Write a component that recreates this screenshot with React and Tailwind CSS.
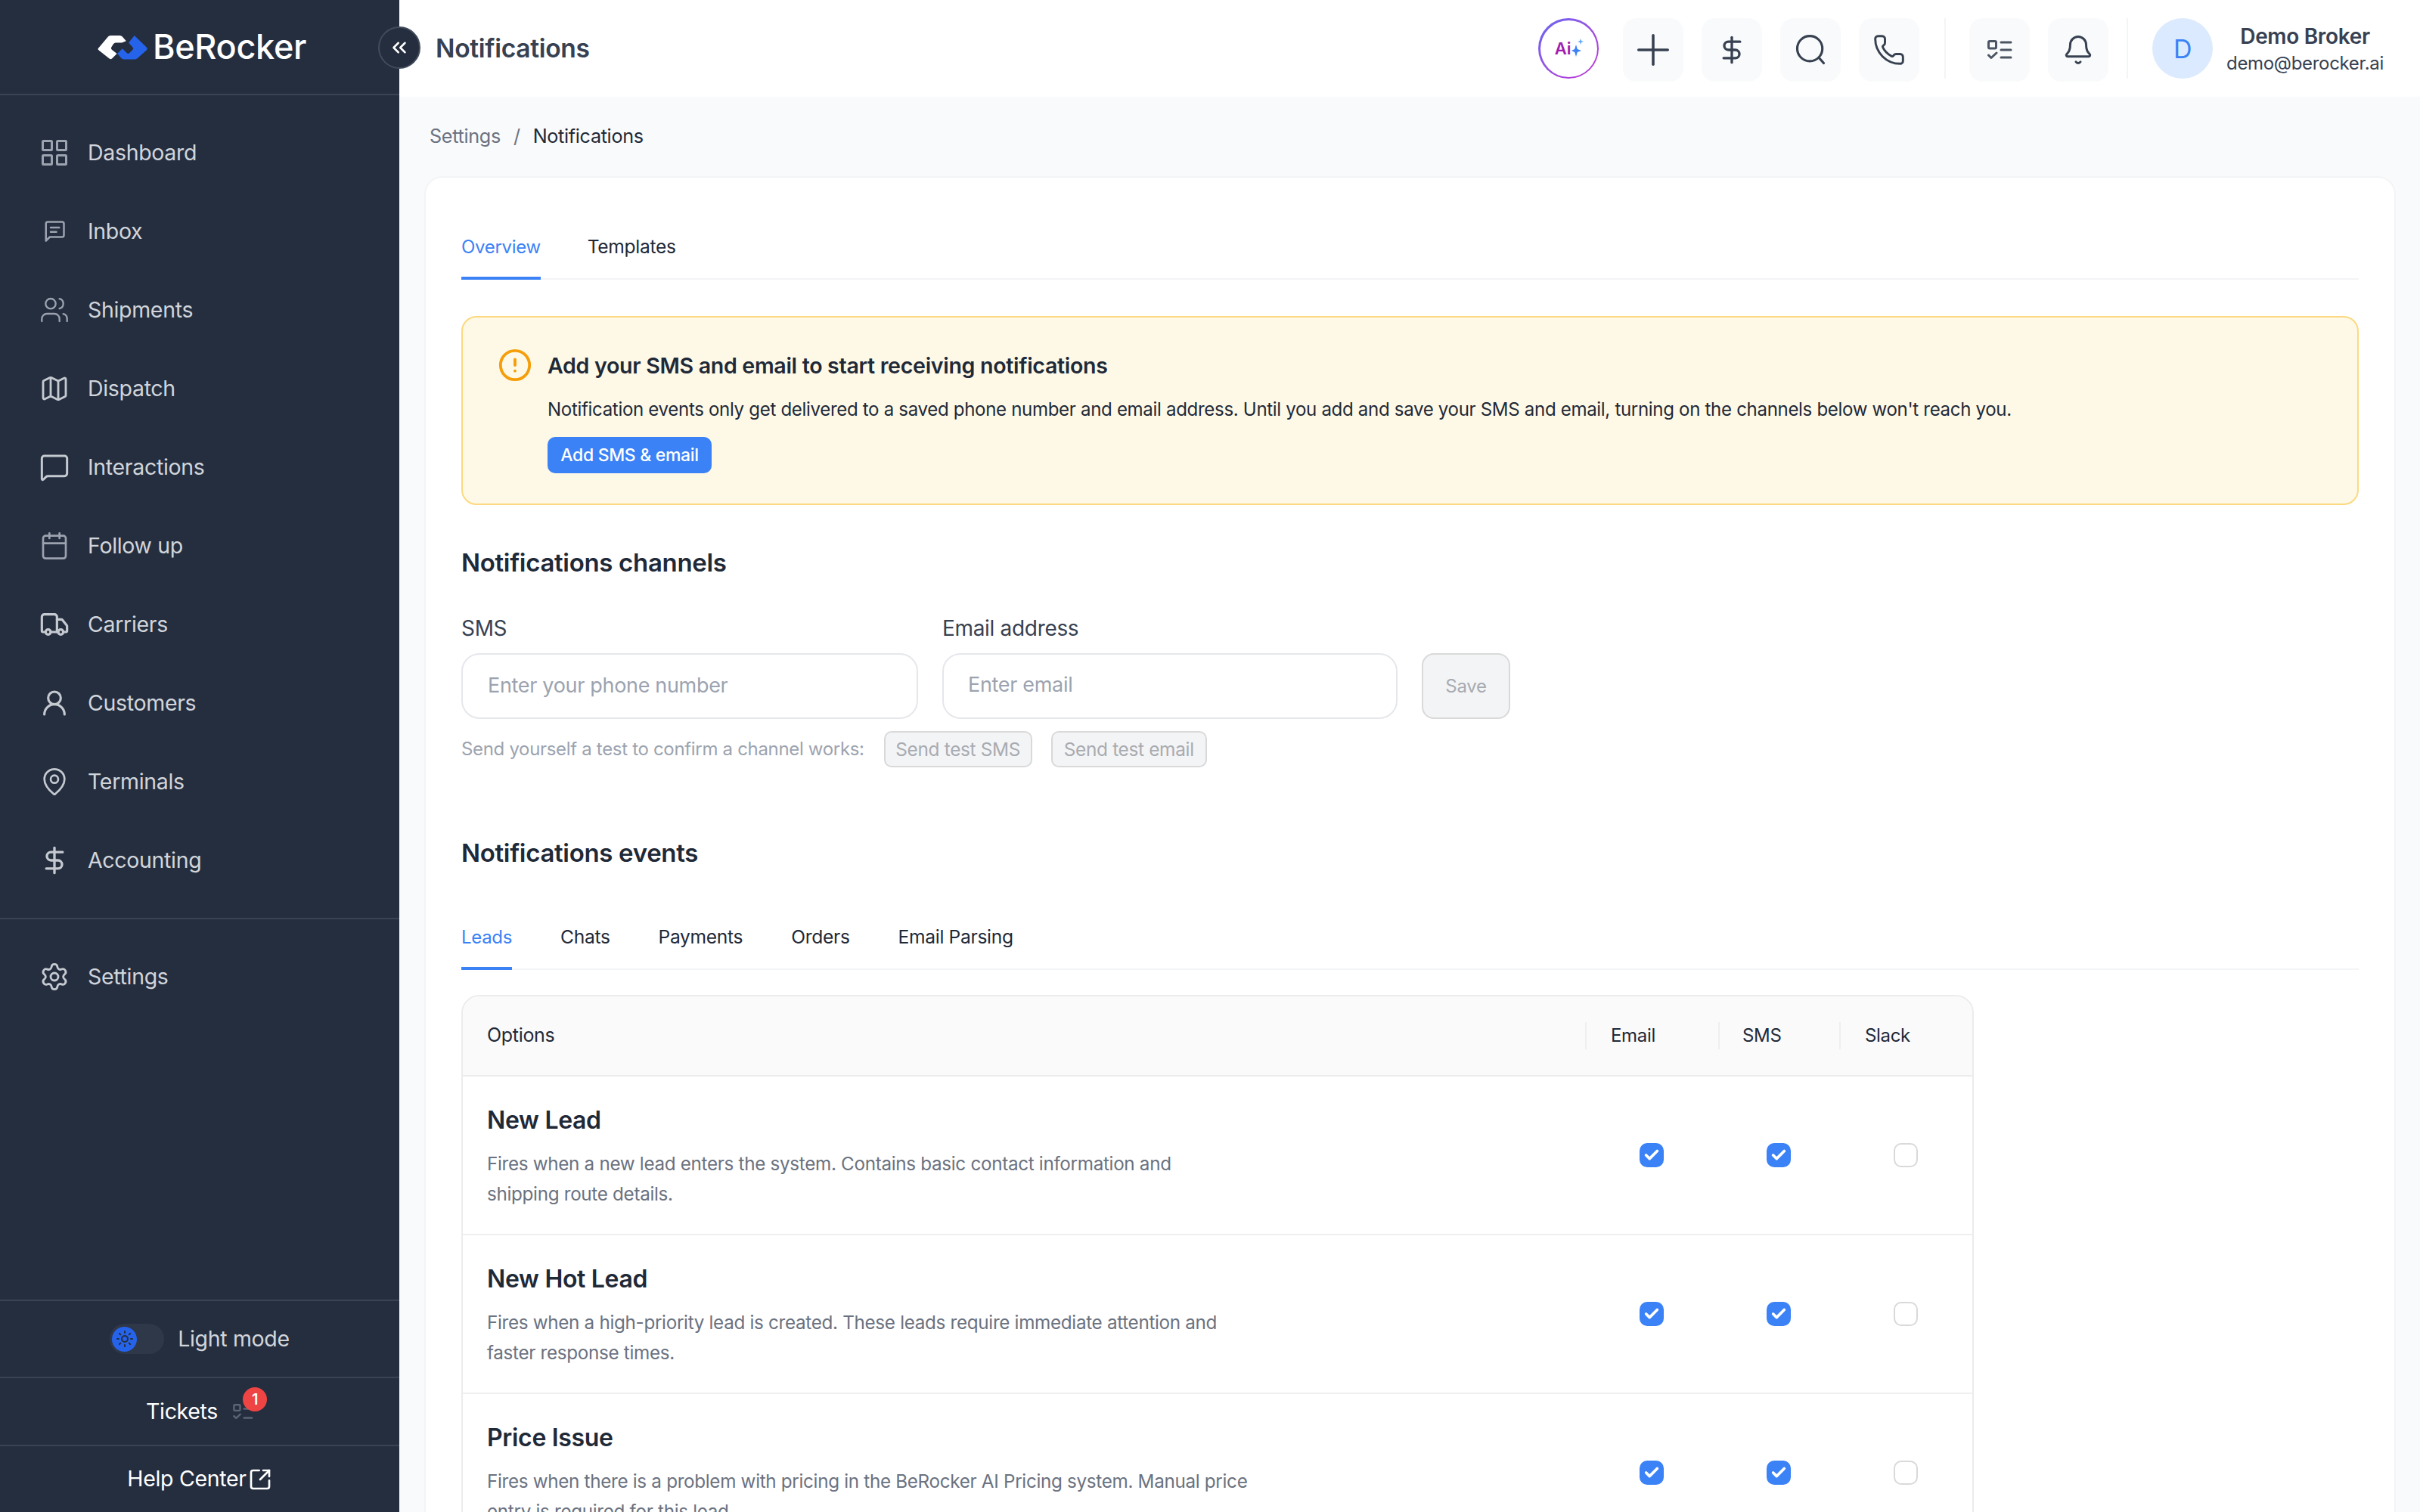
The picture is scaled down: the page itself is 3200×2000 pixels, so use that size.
import React from 'react';
import {
  Users, Map, MessageSquare, Calendar, Truck, UserRound, MapPin,
  Settings, ChevronsLeft, Plus, Phone, Bell, SquareArrowOutUpRight, CircleAlert, Check, Sun,
} from 'lucide-react';

const font = { fontFamily: 'Inter, sans-serif' };

function DashIcon() {
  return (
    <svg width="34" height="34" viewBox="0 0 34 34" fill="none" stroke="currentColor" strokeWidth="3">
      <rect x="1.5" y="1.5" width="12" height="12" rx="1" />
      <rect x="20.5" y="1.5" width="12" height="12" rx="1" />
      <rect x="1.5" y="20.5" width="12" height="12" rx="1" />
      <rect x="20.5" y="20.5" width="12" height="12" rx="1" />
    </svg>
  );
}

function InboxIcon() {
  return (
    <svg width="30" height="30" viewBox="0 0 24 24" fill="none" stroke="currentColor" strokeWidth="2" strokeLinecap="round" strokeLinejoin="round">
      <path d="M5 2h15a2 2 0 0 1 2 2v12a2 2 0 0 1-2 2H7l-4 4V4a2 2 0 0 1 2-2z" />
      <path d="M8 8h9M8 12.5h6" />
    </svg>
  );
}

function DollarIcon({ size = 40, strokeWidth = 2 }) {
  return (
    <svg width={size} height={size} viewBox="0 0 24 24" fill="none" stroke="currentColor" strokeWidth={strokeWidth} strokeLinecap="round" strokeLinejoin="round">
      <path d="M12 2v20" />
      <path d="M18.5 5.5H9.25a3.25 3.25 0 0 0 0 6.5h5.5a3.25 3.25 0 0 1 0 6.5H5.5" />
    </svg>
  );
}

function SearchIcon() {
  return (
    <svg width="42" height="42" viewBox="0 0 24 24" fill="none" stroke="currentColor" strokeWidth="1.8" strokeLinecap="round">
      <circle cx="11.5" cy="11" r="9.5" />
      <path d="M18.5 18l3.5 4" />
    </svg>
  );
}

function TasksIcon({ lines = 3, width = 33, height = 26 }) {
  return (
    <svg width={width} height={height} viewBox="0 0 33 26" fill="none" stroke="currentColor" strokeWidth="3" strokeLinecap="round" strokeLinejoin="round">
      <rect x="1.5" y="1.5" width="10" height="9.5" rx="1.5" />
      <path d="M1.5 20l3.5 3.5 7-6.5" />
      {lines === 3 ? <path d="M18 3h13M18 13h13M18 23h13" /> : <path d="M18 8h13M18 23h13" />}
    </svg>
  );
}

const navItems = [
  { label: 'Dashboard', icon: <DashIcon />, tone: 'text-[#9ca3af]' },
  { label: 'Inbox', icon: <InboxIcon />, tone: 'text-[#9ca3af]' },
  { label: 'Shipments', icon: <Users size={46} strokeWidth={1.4} />, tone: 'text-[#9ca3af]' },
  { label: 'Dispatch', icon: <Map size={54} strokeWidth={1.7} />, tone: 'text-[#c5c9d0]' },
  { label: 'Interactions', icon: <MessageSquare size={50} strokeWidth={1.8} />, tone: 'text-[#c5c9d0]' },
  { label: 'Follow up', icon: <Calendar size={42} strokeWidth={1.6} />, tone: 'text-[#9ca3af]' },
  { label: 'Carriers', icon: <Truck size={42} strokeWidth={1.9} />, tone: 'text-[#c5c9d0]' },
  { label: 'Customers', icon: <UserRound size={42} strokeWidth={1.9} />, tone: 'text-[#c5c9d0]' },
  { label: 'Terminals', icon: <MapPin size={46} strokeWidth={1.6} />, tone: 'text-[#c5c9d0]' },
  { label: 'Accounting', icon: <DollarIcon size={40} />, tone: 'text-[#c5c9d0]' },
];

const events = [
  { title: 'New Lead', width: 'w-[1000px]', desc: 'Fires when a new lead enters the system. Contains basic contact information and shipping route details.' },
  { title: 'New Hot Lead', width: 'w-[1000px]', desc: 'Fires when a high-priority lead is created. These leads require immediate attention and faster response times.' },
  { title: 'Price Issue', width: 'w-[1012px]', desc: 'Fires when there is a problem with pricing in the BeRocker AI Pricing system. Manual price entry is required for this lead.' },
];

function Logo() {
  return (
    <svg width="68" height="35" viewBox="20 28 205 104" fill="none">
      <path d="M25 85 L65 38 Q68 33 75 33 H112 Q118 33 122 38 L137 55 L120 62 H95 Q90 62 86 67 L78 80 Q75 85 80 90 L100 106 L82 124 Q77 130 70 125 L28 92 Q23 88 25 85Z" fill="#fff" />
      <path d="M170 33 L218 80 Q224 85 218 92 L182 124 Q178 128 172 128 H128 Q122 128 118 124 L102 106 L122 85 L140 103 Q145 107 150 103 L163 90 Q168 85 163 80 L147 62 Z" fill="#2563eb" />
    </svg>
  );
}

function NavItem({ item }) {
  return (
    <div className="flex h-[104px] items-center pl-[52px] gap-[24px] text-[28.5px] text-[#d1d5db]">
      <div className={`w-[40px] h-[40px] shrink-0 flex items-center justify-center ${item.tone}`}>{item.icon}</div>
      <span>{item.label}</span>
    </div>
  );
}

function HeadBtn({ children }) {
  return <div className="w-[80px] h-[84px] rounded-[18px] bg-[#f9fafb] flex items-center justify-center text-[#374151]">{children}</div>;
}

function Checkbox({ checked }) {
  return checked ? (
    <div className="w-[32px] h-[32px] rounded-[10px] bg-[#3b82f6] flex items-center justify-center">
      <Check size={22} strokeWidth={4} className="text-white" />
    </div>
  ) : (
    <div className="w-[32px] h-[32px] rounded-[10px] border-2 border-[#d9d9d9] bg-white" />
  );
}

function Tab({ label, active }) {
  return (
    <div className={`h-[89px] pt-[6px] flex items-center border-b-4 -mb-[2px] ${active ? 'border-[#3b82f6] text-[#3b82f6] text-[24px]' : 'border-transparent text-[#1f2937] text-[24.6px]'}`}>
      {label}
    </div>
  );
}

export default function App() {
  return (
    <div style={font} className="flex h-screen w-full overflow-hidden bg-[#f9fafb] tracking-[-0.02em]">
      {/* sidebar */}
      <aside className="w-[528px] shrink-0 bg-[#252e3f] flex flex-col relative z-10">
        <div className="h-[126px] shrink-0 border-b-2 border-[#3a4354] flex items-center pl-[128px] gap-[6px]">
          <Logo />
          <span className="text-[45px] font-medium text-white">BeRocker</span>
        </div>
        <button className="absolute left-[500px] top-[35px] w-[56px] h-[56px] rounded-full border-2 border-[#424b5c] bg-[#252e3f] flex items-center justify-center text-white">
          <ChevronsLeft size={30} strokeWidth={2} />
        </button>
        <nav className="pt-[24px] pb-[24px] border-b-2 border-[#3a4354]">
          {navItems.map(item => <NavItem key={item.label} item={item} />)}
        </nav>
        <div className="pt-[24px]">
          <NavItem item={{ label: 'Settings', icon: <Settings size={46} strokeWidth={1.7} />, tone: 'text-[#c5c9d0]' }} />
        </div>
        <div className="mt-auto text-[28.5px]">
          <div className="h-[102px] border-t-2 border-[#3a4354] flex items-center justify-center gap-[18px] text-[#d1d5db]">
            <div className="w-[72px] h-[40px] rounded-full bg-[#2f3848] flex items-center pl-[3px]">
              <div className="w-[33px] h-[33px] rounded-full bg-[#2563eb] flex items-center justify-center">
                <Sun size={24} strokeWidth={2} className="text-[#252e3f]" />
              </div>
            </div>
            <span>Light mode</span>
          </div>
          <div className="h-[90px] border-t-2 border-[#3a4354] flex items-center justify-center gap-[20px] text-white">
            <span>Tickets</span>
            <div className="relative text-[#5b6472]">
              <TasksIcon lines={2} width={27} height={21} />
              <span className="absolute -top-[22px] left-[13px] w-[32px] h-[32px] rounded-full bg-[#ef4444] text-[20px] font-semibold text-white flex items-center justify-center">1</span>
            </div>
          </div>
          <div className="h-[89px] border-t-2 border-[#3a4354] flex items-center justify-center gap-[2px] text-white">
            <span>Help Center</span>
            <SquareArrowOutUpRight size={32} strokeWidth={2} />
          </div>
        </div>
      </aside>

      <div className="flex-1 min-w-0 flex flex-col">
        {/* header */}
        <header className="h-[128px] shrink-0 bg-white flex items-center pl-[48px] pr-[48px]">
          <h1 className="text-[33.6px] font-semibold text-[#374151]">Notifications</h1>
          <div className="ml-auto flex items-start gap-[24px] self-start pt-[24px]">
            <div className="w-[80px] h-[80px] mr-[8px] rounded-full p-[2.5px] bg-gradient-to-br from-[#6366f1] to-[#c026d3]">
              <div className="w-full h-full rounded-full bg-white flex items-center justify-center gap-[1px] pl-[2px]">
                <span className="text-[22px] font-semibold text-[#a21caf] tracking-normal">Ai</span>
                <svg width="16" height="24" viewBox="0 0 16 24" className="-mt-[2px]">
                  <path d="M6 8 L7.8 14 L13 16 L7.8 18 L6 24 L4.2 18 L0 16 L4.2 14 Z" fill="#3b82f6" />
                  <path d="M12 0 L13 3 L16 4 L13 5 L12 8 L11 5 L8 4 L11 3 Z" fill="#60a5fa" />
                </svg>
              </div>
            </div>
            <HeadBtn><Plus size={66} strokeWidth={1.3} /></HeadBtn>
            <HeadBtn><DollarIcon size={40} strokeWidth={2} /></HeadBtn>
            <HeadBtn><SearchIcon /></HeadBtn>
            <HeadBtn><Phone size={44} strokeWidth={1.6} /></HeadBtn>
            <div className="w-[2px] h-[80px] bg-[#f3f4f6] ml-[9px] mr-[7px]" />
            <HeadBtn><span className="text-[#4b5563]"><TasksIcon /></span></HeadBtn>
            <HeadBtn><Bell size={42} strokeWidth={1.7} /></HeadBtn>
            <div className="w-[2px] h-[80px] bg-[#f3f4f6] mr-[8px]" />
            <div className="flex items-center gap-[18px]">
              <div className="w-[80px] h-[80px] rounded-full bg-[#dbeafe] flex items-center justify-center text-[34px] text-[#3b82f6]">D</div>
              <div className="flex flex-col items-center">
                <span className="text-[28px] font-semibold text-[#374151] leading-[40px]">Demo Broker</span>
                <span className="text-[24px] text-[#374151] leading-[32px]">demo@berocker.ai</span>
              </div>
            </div>
          </div>
        </header>

        {/* content */}
        <main className="flex-1 min-h-0 pl-[33px] pr-[32px] overflow-hidden">
          <div className="h-[105px] flex items-center pl-[7px] gap-[17px] text-[25.2px]">
            <span className="text-[#6b7280]">Settings</span>
            <span className="text-[#6b7280]">/</span>
            <span className="text-[#1f2937]">Notifications</span>
          </div>
          <div className="bg-white rounded-t-[24px] border-2 border-[#f3f4f6] pt-[46px] px-[47px] h-[1800px]">
            <div className="flex gap-[62px] border-b-2 border-[#f3f4f6]">
              <Tab label="Overview" active />
              <Tab label="Templates" />
            </div>

            <div className="mt-[48px] h-[250px] rounded-[20px] border-2 border-[#fcd980] bg-[#fef9e7] flex pl-[46px] pt-[40px] gap-[20px]">
              <CircleAlert size={46} strokeWidth={2} className="text-[#f59e0b] shrink-0" />
              <div>
                <p className="text-[28.6px] font-semibold text-[#1f2937] leading-[48px]">Add your SMS and email to start receiving notifications</p>
                <p className="text-[24.05px] text-[#1f2937] leading-[40px] mt-[14px]">Notification events only get delivered to a saved phone number and email address. Until you add and save your SMS and email, turning on the channels below won't reach you.</p>
                <button className="mt-[16px] h-[48px] w-[217px] rounded-[10px] bg-[#3b82f6] text-white text-[23px] font-medium">Add SMS &amp; email</button>
              </div>
            </div>

            <h2 className="mt-[54px] text-[33px] font-semibold text-[#1f2937] leading-[44px]">Notifications channels</h2>

            <div className="mt-[46px] flex items-end gap-[32px]">
              <label className="block w-[604px]">
                <span className="block text-[28px] text-[#374151] leading-[38px] mb-[14px]">SMS</span>
                <div className="h-[87px] rounded-[24px] border-2 border-[#e5e7eb] flex items-center pl-[33px] text-[27px] text-[#9ca3af]">Enter your phone number</div>
              </label>
              <label className="block w-[602px]">
                <span className="block text-[28px] text-[#374151] leading-[38px] mb-[14px]">Email address</span>
                <div className="h-[87px] rounded-[24px] border-2 border-[#e5e7eb] flex items-center pl-[32px] pb-[2px] text-[27px] text-[#9ca3af]">Enter email</div>
              </label>
              <button className="h-[87px] w-[117px] rounded-[16px] border-2 border-[#d9d9d9] bg-[#f3f4f6] text-[24px] text-[#a8abb0]">Save</button>
            </div>

            <div className="mt-[16px] flex items-center text-[24px]">
              <span className="text-[#9ca3af]">Send yourself a test to confirm a channel works:</span>
              <button className="ml-[26px] h-[48px] w-[196px] rounded-[10px] border-2 border-[#d9d9d9] bg-[#f3f4f6] text-[#a8abb0] text-[24.4px]">Send test SMS</button>
              <button className="ml-[25px] h-[48px] w-[206px] rounded-[10px] border-2 border-[#d9d9d9] bg-[#f3f4f6] text-[#a8abb0] text-[24.4px]">Send test email</button>
            </div>

            <h2 className="mt-[91px] text-[33px] font-semibold text-[#1f2937] leading-[44px]">Notifications events</h2>

            <div className="mt-[44px] flex gap-[64px] border-b-2 border-[#f3f4f6]">
              <Tab label="Leads" active />
              <Tab label="Chats" />
              <Tab label="Payments" />
              <Tab label="Orders" />
              <Tab label="Email Parsing" />
            </div>

            <div className="mt-[33px] w-[2000px] rounded-t-[24px] border-2 border-[#ececec] overflow-hidden">
              <div className="h-[106px] bg-[#fafafa] border-b-2 border-[#ececec] flex items-center pl-[32px] text-[24px] text-[#1f2937]">
                <span className="flex-1 text-[25px]">Options</span>
                <div className="w-[176px] h-[36px] border-l-2 border-[#efefef] pl-[32px] flex items-center">Email</div>
                <div className="w-[160px] h-[36px] border-l-2 border-[#efefef] pl-[30px] flex items-center">SMS</div>
                <div className="w-[176px] h-[36px] border-l-2 border-[#efefef] pl-[32px] flex items-center">Slack</div>
              </div>
              {events.map(ev => (
                <div key={ev.title} className="h-[210px] border-b-2 border-[#efefef] flex items-center pl-[32px]">
                  <div className="flex-1 pt-[3px]">
                    <h3 className="text-[32px] font-semibold text-[#1f2937] leading-[44px]">{ev.title}</h3>
                    <p className={`mt-[16px] ${ev.width} text-[24.25px] leading-[40px] text-[#6b7280]`}>{ev.desc}</p>
                  </div>
                  <div className="w-[168px] flex justify-center"><Checkbox checked /></div>
                  <div className="w-[168px] flex justify-center"><Checkbox checked /></div>
                  <div className="w-[168px] flex justify-center mr-[4px]"><Checkbox /></div>
                </div>
              ))}
            </div>
          </div>
        </main>
      </div>
    </div>
  );
}
